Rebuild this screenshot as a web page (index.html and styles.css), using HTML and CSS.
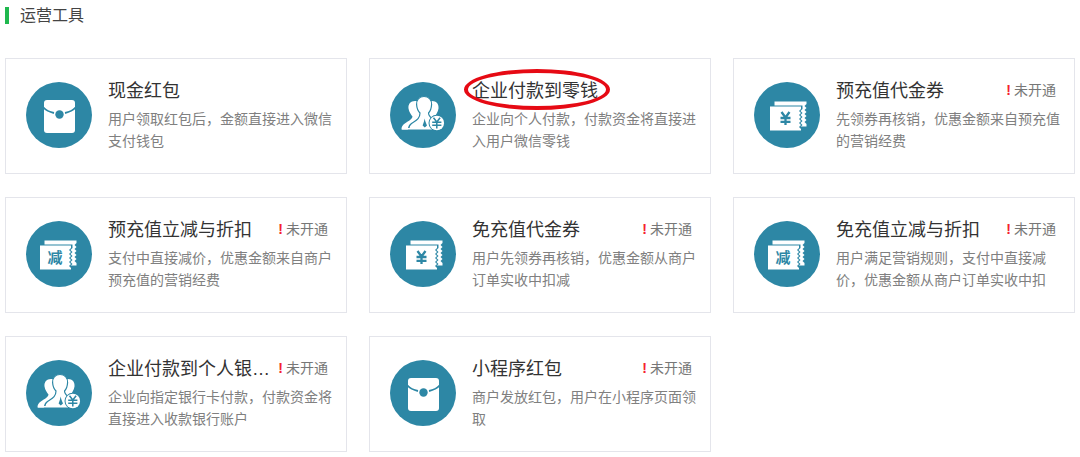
FILE: index.html
```html
<!DOCTYPE html>
<html lang="zh-CN">
<head>
  <meta charset="UTF-8">
  <meta name="viewport" content="width=device-width, initial-scale=1">
  <title>运营工具</title>
  <link rel="stylesheet" href="styles.css">
</head>
<body>
  <!-- shared icons -->
  <svg class="sprite" aria-hidden="true">
    <symbol id="icon-packet" viewBox="0 0 66 66">
      <rect x="18" y="18" width="31" height="33" rx="3" fill="#fff"/>
      <path d="M17.500 25.500Q21 29.500 28 31M49.500 25.500Q46 29.500 39 31" fill="none" stroke="#2d87a5" stroke-width="1.800"/>
      <circle cx="33.500" cy="32.500" r="4.200" fill="#2d87a5"/>
    </symbol>
    <symbol id="icon-people" viewBox="0 0 66 66">
      <path d="M25 19C20.500 19 18 22 18.500 26.500C19 30 21 32.500 22.500 34.500C22 38 17 39.500 13.500 42.500C12 44 11.500 45.500 11.500 47.500H36V19Z" fill="#fff"/>
      <path d="M42 19C46.500 19 49 22 48.500 26.500C48 30 46 32.500 45 34.500L46 38H36V19Z" fill="#fff"/>
      <path d="M34 14.500C29 14.500 26.300 18 26.600 22.500C26.800 26.500 28.500 29.500 30 31C30 37 26 38.500 21.500 41.500C19.500 43 18.500 45 18.500 47.500H50V42C47 38.500 38.500 37 38.500 31C40 29.500 41.400 26.500 41.600 22.500C41.900 18 39 14.500 34 14.500Z" fill="#fff" stroke="#2d87a5" stroke-width="1.200"/>
      <path d="M12 46.800H42" stroke="#fff" stroke-width="1.500"/>
      <path d="M34.600 36.500L35.400 39.500L37 43.500L34.800 45.500L32.600 43.500L34 39.500Z" fill="#2d87a5"/>
      <circle cx="46.800" cy="41" r="8.300" fill="#2d87a5"/>
      <circle cx="46.800" cy="41" r="7.300" fill="#fff"/>
      <path d="M43.500 35.800L46.800 40L50.100 35.800M46.800 40V46.500M42.200 40.200H51.400M42.200 43.200H51.400" fill="none" stroke="#2d87a5" stroke-width="1.500"/>
    </symbol>
    <symbol id="icon-ticket" viewBox="0 0 66 66">
      <path d="M20.500 19.500H52.500V22L50.500 24L52.500 26L50.500 28L52.500 30L50.500 32L52.500 34L50.500 36L52.500 38L50.500 40L52.500 42V44.500H20.500Z" fill="#fff"/>
      <path d="M15 23.500H48.500V27L46.500 29L48.500 31L46.500 33L48.500 35L46.500 37L48.500 39L46.500 41L48.500 43L46.500 45L48.500 47V49H15Z" fill="#2d87a5"/>
      <path d="M16 24.500H47V27L45 29L47 31L45 33L47 35L45 37L47 39L45 41L47 43L45 45L47 47V48.500H16Z" fill="#fff"/>
    </symbol>
    <symbol id="icon-yen" viewBox="0 0 66 66">
      <path d="M27.500 30L31.500 35.500L35.500 30M31.500 35.500V43M26.500 36H36.500M26.500 39.800H36.500" fill="none" stroke="#2d87a5" stroke-width="2.300"/>
    </symbol>
  </svg>

  <main class="tools">
    <h2 class="tools-title">运营工具</h2>
    <ul class="tool-list">
      <li class="tool-card">
        <svg class="tool-icon" viewBox="0 0 66 66" aria-hidden="true"><use href="#icon-packet"/></svg>
        <div class="tool-info">
          <div class="tool-head">
            <h3 class="tool-name">现金红包</h3>
          </div>
          <p class="tool-desc">用户领取红包后，金额直接进入微信支付钱包</p>
        </div>
      </li>
      <li class="tool-card marked">
        <svg class="tool-icon" viewBox="0 0 66 66" aria-hidden="true"><use href="#icon-people"/></svg>
        <div class="tool-info">
          <div class="tool-head">
            <h3 class="tool-name">企业付款到零钱</h3>
          </div>
          <p class="tool-desc">企业向个人付款，付款资金将直接进入用户微信零钱</p>
        </div>
      </li>
      <li class="tool-card">
        <svg class="tool-icon" viewBox="0 0 66 66" aria-hidden="true"><use href="#icon-ticket"/><use href="#icon-yen"/></svg>
        <div class="tool-info">
          <div class="tool-head">
            <h3 class="tool-name">预充值代金券</h3>
            <span class="tool-status">未开通</span>
          </div>
          <p class="tool-desc">先领券再核销，优惠金额来自预充值的营销经费</p>
        </div>
      </li>
      <li class="tool-card">
        <svg class="tool-icon" viewBox="0 0 66 66" aria-hidden="true">
          <use href="#icon-ticket" x="-2" width="66" height="66"/>
          <text class="icon-text" x="29" y="42">减</text>
        </svg>
        <div class="tool-info">
          <div class="tool-head">
            <h3 class="tool-name">预充值立减与折扣</h3>
            <span class="tool-status">未开通</span>
          </div>
          <p class="tool-desc">支付中直接减价，优惠金额来自商户预充值的营销经费</p>
        </div>
      </li>
      <li class="tool-card">
        <svg class="tool-icon" viewBox="0 0 66 66" aria-hidden="true"><use href="#icon-ticket"/><use href="#icon-yen"/></svg>
        <div class="tool-info">
          <div class="tool-head">
            <h3 class="tool-name">免充值代金券</h3>
            <span class="tool-status">未开通</span>
          </div>
          <p class="tool-desc">用户先领券再核销，优惠金额从商户订单实收中扣减</p>
        </div>
      </li>
      <li class="tool-card">
        <svg class="tool-icon" viewBox="0 0 66 66" aria-hidden="true">
          <use href="#icon-ticket" x="-2" width="66" height="66"/>
          <text class="icon-text" x="29" y="42">减</text>
        </svg>
        <div class="tool-info">
          <div class="tool-head">
            <h3 class="tool-name">免充值立减与折扣</h3>
            <span class="tool-status">未开通</span>
          </div>
          <p class="tool-desc">用户满足营销规则，支付中直接减价，优惠金额从商户订单实收中扣</p>
        </div>
      </li>
      <li class="tool-card">
        <svg class="tool-icon" viewBox="0 0 66 66" aria-hidden="true"><use href="#icon-people"/></svg>
        <div class="tool-info">
          <div class="tool-head">
            <h3 class="tool-name">企业付款到个人银…</h3>
            <span class="tool-status">未开通</span>
          </div>
          <p class="tool-desc">企业向指定银行卡付款，付款资金将直接进入收款银行账户</p>
        </div>
      </li>
      <li class="tool-card">
        <svg class="tool-icon" viewBox="0 0 66 66" aria-hidden="true"><use href="#icon-packet"/></svg>
        <div class="tool-info">
          <div class="tool-head">
            <h3 class="tool-name">小程序红包</h3>
            <span class="tool-status">未开通</span>
          </div>
          <p class="tool-desc">商户发放红包，用户在小程序页面领取</p>
        </div>
      </li>
    </ul>
  </main>
</body>
</html>
```
FILE: styles.css
```css
* {
  box-sizing: border-box;
}
body {
  margin: 0;
  background: #ffffff;
  color: #333333;
  font-family: "Liberation Sans", "Noto Sans CJK SC", sans-serif;
}
h2, h3, p, ul {
  margin: 0;
  padding: 0;
  font-weight: normal;
}
.sprite {
  display: none;
}
.tools {
  padding: 7px 5px 0;
}
.tools-title {
  margin-bottom: 34px;
  padding-left: 11px;
  border-left: 4px solid #1fb84e;
  color: #444444;
  font-size: 16px;
  line-height: 17px;
}
.tool-list {
  display: grid;
  grid-template-columns: repeat(3, 1fr);
  gap: 23px 22px;
  list-style: none;
}
.tool-card {
  display: flex;
  align-items: center;
  gap: 16px;
  padding: 19px 12px 21px 20px;
  border: 1px solid #e4e5eb;
}
.tool-icon {
  flex: none;
  width: 66px;
  height: 66px;
  border-radius: 50%;
  background: #2d87a5;
}
.icon-text {
  fill: #2d87a5;
  font-size: 15px;
  font-weight: bold;
  text-anchor: middle;
}
.tool-info {
  flex: 1;
  min-width: 0;
}
.tool-head {
  display: flex;
  align-items: flex-start;
  justify-content: space-between;
  margin-bottom: 4px;
  padding-right: 6px;
}
.tool-name {
  position: relative;
  overflow: hidden;
  font-size: 18px;
  line-height: 26px;
  text-overflow: ellipsis;
  white-space: nowrap;
}
.tool-status {
  flex: none;
  color: #777777;
  font-size: 14px;
  line-height: 24px;
}
.tool-status::before {
  content: "!";
  margin-right: 3px;
  color: #f5222d;
  font-weight: bold;
}
.tool-desc {
  color: #808080;
  font-size: 14px;
  line-height: 22px;
}
/* red ring round the highlighted tool */
.marked .tool-name {
  overflow: visible;
}
.marked .tool-name::after {
  content: "";
  position: absolute;
  top: -9px;
  left: -8px;
  right: -12px;
  bottom: -6px;
  border: 4px solid #e60a14;
  border-radius: 50%;
}
```
